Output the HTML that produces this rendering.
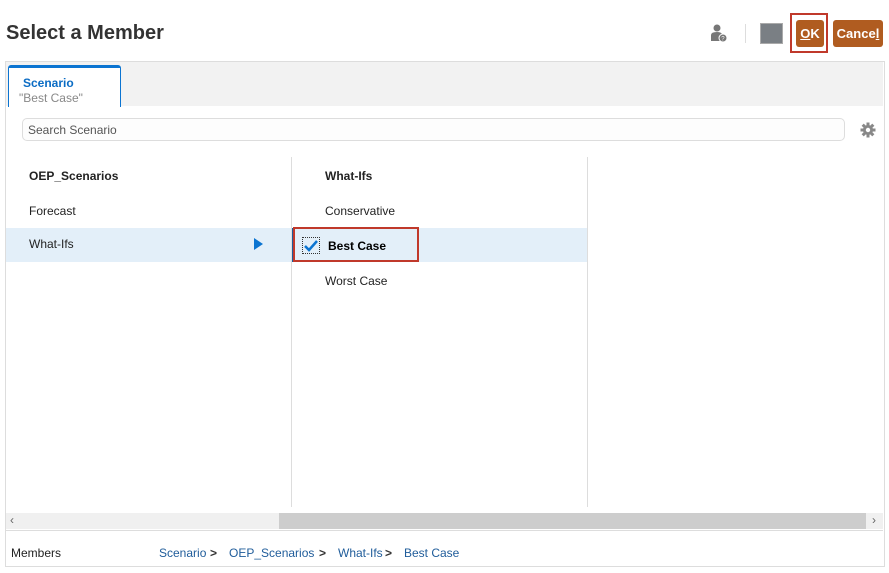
<!DOCTYPE html>
<html><head><style>
body{margin:0;width:889px;height:573px;background:#fff;font-family:"Liberation Sans",Arial,sans-serif;position:relative;overflow:hidden}
.a{position:absolute}
.t{font-size:12px;color:#222}
</style></head><body>
<div class="a" style="left:6px;top:22px;font-size:20px;font-weight:bold;color:#333">Select a Member</div>
<svg class="a" style="left:709px;top:23px" width="20" height="20"><circle cx="8" cy="5" r="3.5" fill="#777"/><path d="M2 18 V12 Q2 9 8 9 Q12 9 13 11 L11 18Z" fill="#777"/><circle cx="14" cy="15" r="4" fill="#777" stroke="#fff" stroke-width="1"/><text x="12.3" y="17.5" font-size="6" fill="#fff" font-family="Liberation Sans">?</text></svg>
<div class="a" style="left:745px;top:24px;width:1px;height:19px;background:#ddd"></div>
<div class="a" style="left:760px;top:23px;width:21px;height:19px;background:#7a7f84;border:1px solid #aaa"></div>
<div class="a" style="left:790px;top:13px;width:38px;height:40px;border:2px solid #c0392b;box-sizing:border-box"></div>
<div class="a" style="left:796px;top:20px;width:28px;height:27px;background:#b05c20;border-radius:3px;color:#fff;font-weight:bold;font-size:13px;text-align:center;line-height:27px"><u>O</u>K</div>
<div class="a" style="left:833px;top:20px;width:50px;height:27px;background:#b05c20;border-radius:3px;color:#fff;font-weight:bold;font-size:13px;text-align:center;line-height:27px">Cance<u>l</u></div>
<div class="a" style="left:5px;top:61px;width:878px;height:504px;border:1px solid #ddd"></div>
<div class="a" style="left:6px;top:62px;width:877px;height:44px;background:#f2f2f2"></div>
<div class="a" style="left:8px;top:65px;width:113px;height:42px;background:#fff;border:1px solid #0b74d1;border-top:3px solid #0b74d1;border-bottom:none;border-radius:3px 3px 0 0;box-sizing:border-box"></div>
<div class="a" style="left:23px;top:76px;font-size:12px;font-weight:bold;color:#0b6cc4">Scenario</div>
<div class="a" style="left:19px;top:91px;font-size:12px;color:#888">"Best Case"</div>
<div class="a" style="left:22px;top:118px;width:823px;height:23px;border:1px solid #ddd;border-radius:5px;box-sizing:border-box;background:#fdfdfd"></div>
<div class="a" style="left:28px;top:123px;font-size:12px;color:#555">Search Scenario</div>
<svg class="a" style="left:860px;top:122px" width="16" height="16" viewBox="0 0 16 16"><g fill="#888"><circle cx="8" cy="8" r="5"/><rect x="6.5" y="0.5" width="3" height="15"/><rect x="0.5" y="6.5" width="15" height="3"/><rect x="6.5" y="0.5" width="3" height="15" transform="rotate(45 8 8)"/><rect x="6.5" y="0.5" width="3" height="15" transform="rotate(-45 8 8)"/></g><circle cx="8" cy="8" r="2.2" fill="#fff"/></svg>
<div class="a" style="left:291px;top:157px;width:1px;height:350px;background:#ddd"></div>
<div class="a" style="left:587px;top:157px;width:1px;height:350px;background:#ddd"></div>
<div class="a t" style="left:29px;top:169px;font-weight:bold">OEP_Scenarios</div>
<div class="a t" style="left:29px;top:204px">Forecast</div>
<div class="a" style="left:6px;top:228px;width:285px;height:34px;background:#e3eff9"></div>
<div class="a t" style="left:29px;top:237px">What-Ifs</div>
<svg class="a" style="left:254px;top:238px" width="10" height="12"><path d="M0 0 L9 6 L0 12Z" fill="#0b74d1"/></svg>
<div class="a t" style="left:325px;top:169px;font-weight:bold">What-Ifs</div>
<div class="a t" style="left:325px;top:204px">Conservative</div>
<div class="a" style="left:292px;top:228px;width:295px;height:34px;background:#e3eff9;border-left:3px solid #1f5c9a;box-sizing:border-box"></div>
<div class="a" style="left:293px;top:227px;width:126px;height:35px;border:2px solid #c0392b;box-sizing:border-box"></div>
<div class="a" style="left:302px;top:237px;width:18px;height:17px;border:1px dotted #333;box-sizing:border-box"></div>
<svg class="a" style="left:304px;top:239px" width="14" height="13"><path d="M1 7 L5 11 L13 2" stroke="#0b74d1" stroke-width="2.5" fill="none"/></svg>
<div class="a t" style="left:328px;top:239px;font-weight:bold;color:#000">Best Case</div>
<div class="a t" style="left:325px;top:274px">Worst Case</div>
<div class="a" style="left:6px;top:513px;width:877px;height:16px;background:#f0f0f0"></div>
<div class="a" style="left:279px;top:513px;width:587px;height:16px;background:#cdcdcd"></div>
<div class="a" style="left:10px;top:513px;font-size:12px;color:#666">‹</div>
<div class="a" style="left:872px;top:513px;font-size:12px;color:#666">›</div>
<div class="a" style="left:6px;top:530px;width:877px;height:1px;background:#ddd"></div>
<div class="a t" style="left:11px;top:546px">Members</div>
<div class="a" style="left:159px;top:546px;font-size:12px;color:#1f5c9a">Scenario</div>
<div class="a" style="left:210px;top:546px;font-size:12px;color:#333;font-weight:bold">&gt;</div>
<div class="a" style="left:229px;top:546px;font-size:12px;color:#1f5c9a">OEP_Scenarios</div>
<div class="a" style="left:319px;top:546px;font-size:12px;color:#333;font-weight:bold">&gt;</div>
<div class="a" style="left:338px;top:546px;font-size:12px;color:#1f5c9a">What-Ifs</div>
<div class="a" style="left:385px;top:546px;font-size:12px;color:#333;font-weight:bold">&gt;</div>
<div class="a" style="left:404px;top:546px;font-size:12px;color:#1f5c9a">Best Case</div>
</body></html>
